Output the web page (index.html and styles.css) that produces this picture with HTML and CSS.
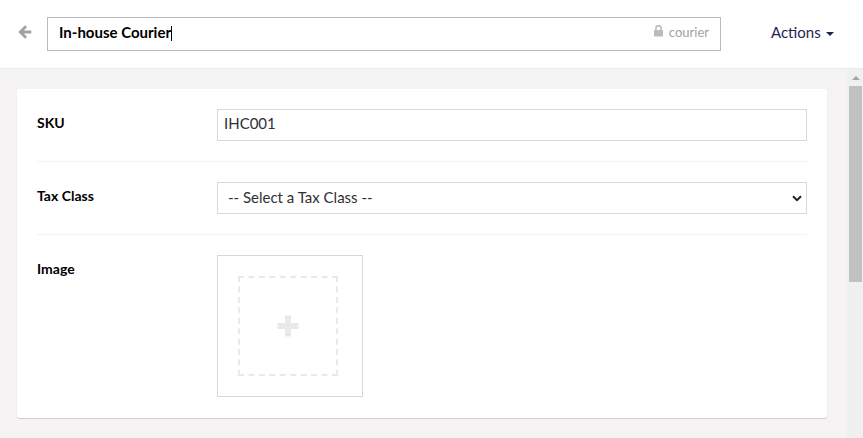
FILE: index.html
```html
<!DOCTYPE html>
<html lang="en">
<head>
<meta charset="utf-8">
<title>In-house Courier</title>
<link rel="stylesheet" href="styles.css">
</head>
<body>
<header class="header">
  <svg class="back" width="14" height="14" viewBox="0 0 14 14"><path d="M8 1.3 2.3 7 8 12.7M2.8 7H13.3" fill="none" stroke="#a2a1a6" stroke-width="2.9"/></svg>
  <div class="name-field">
    <span class="name">In-house Courier</span><span class="caret"></span>
    <span class="alias">
      <svg class="lock" width="9" height="12" viewBox="0 0 9 12"><path d="M1.9 6V3.3a2.6 2.6 0 0 1 5.2 0V6" fill="none" stroke="#bbbabf" stroke-width="1.5"/><rect y="5" width="9" height="6.5" rx=".7" fill="#bbbabf"/></svg>
      <span>courier</span>
    </span>
  </div>
  <div class="actions"><span>Actions</span><i class="caret-down"></i></div>
</header>
<div class="body">
  <main class="content">
    <section class="card">
      <div class="row">
        <div class="label">SKU</div>
        <div class="control text">IHC001</div>
      </div>
      <div class="row">
        <div class="label">Tax Class</div>
        <div class="control select"><span>-- Select a Tax Class --</span>
          <svg width="10" height="7" viewBox="0 0 10 7"><path d="M1 1.2 5 5.2l4-4" fill="none" stroke="#222" stroke-width="2"/></svg>
        </div>
      </div>
      <div class="row">
        <div class="label">Image</div>
        <div class="picker">
          <svg width="100" height="100" viewBox="0 0 100 100" fill="none" stroke="#e9e9eb" stroke-width="2">
            <path d="M0 1h100M0 99h100M1 0v100M99 0v100" stroke-dasharray="6 4.444"/>
            <path d="M39.5 50h21M50 39.5v21" stroke-width="6"/>
          </svg>
        </div>
      </div>
    </section>
  </main>
  <div class="scrollbar">
    <div class="arrow"></div>
    <div class="thumb"></div>
  </div>
</div>
</body>
</html>
```

FILE: styles.css
```css
* { box-sizing: border-box; }
body {
  margin: 0;
  height: 438px;
  display: flex;
  flex-direction: column;
  overflow: hidden;
  background: #f5f3f4;
  color: #303033;
  font: 15px/20px Lato, sans-serif;
}
svg { display: block; flex: none; }
.header {
  height: 69px;
  flex: none;
  display: flex;
  align-items: flex-start;
  padding: 17px 0 0 18px;
  background: #fff;
  border-bottom: 1px solid #e9e9eb;
}
.back { margin: 8px 15px 0 0; }
.name-field {
  width: 674px;
  height: 34px;
  display: flex;
  align-items: center;
  padding: 0 11px 4px;
  border: 1px solid #bbbabf;
}
.name { color: #000; font-weight: 700; }
.caret { width: 1px; height: 15px; margin-top: 3px; background: #000; }
.alias {
  margin-left: auto;
  display: flex;
  align-items: center;
  gap: 6px;
  color: #a2a1a6;
  font-size: 13px;
}
.lock { margin-top: -2px; }
.actions {
  display: flex;
  align-items: center;
  gap: 5px;
  margin: 5px 0 0 50px;
  color: #1b264f;
}
.caret-down {
  border: 4px solid transparent;
  border-top-color: #1b264f;
  border-bottom: 0;
  margin-top: 4px;
}
.body { flex: 1; display: flex; min-height: 0; }
.content { flex: 1; padding: 20px 20px 0 17px; }
.card {
  height: 329px;
  padding: 0 20px;
  background: #fff;
  border-radius: 3px;
  box-shadow: 0 1px 1px rgba(0, 0, 0, .16);
}
.row { display: flex; padding: 20px 0; }
.row + .row { border-top: 1px solid #f3f3f5; }
.label {
  width: 180px;
  padding-top: 4px;
  color: #000;
  font-size: 14px;
  font-weight: 700;
}
.control {
  flex: 1;
  height: 32px;
  padding: 3px 6px;
  border: 1px solid #d8d7d9;
}
.select {
  display: flex;
  align-items: center;
  justify-content: space-between;
  padding: 0 4px 0 10px;
}
.select span { margin-top: -2px; }
.picker {
  width: 146px;
  height: 142px;
  padding: 20px;
  border: 1px solid #d8d7d9;
}
.scrollbar {
  width: 16px;
  padding: 7px 1px 0 2px;
  background: #f0f0f0;
}
.arrow {
  width: 8px;
  margin: 0 auto 6px;
  border: 4px solid transparent;
  border-top: 0;
  border-bottom-color: #a3a3a3;
}
.thumb { height: 196px; background: #c1c1c1; }
```
